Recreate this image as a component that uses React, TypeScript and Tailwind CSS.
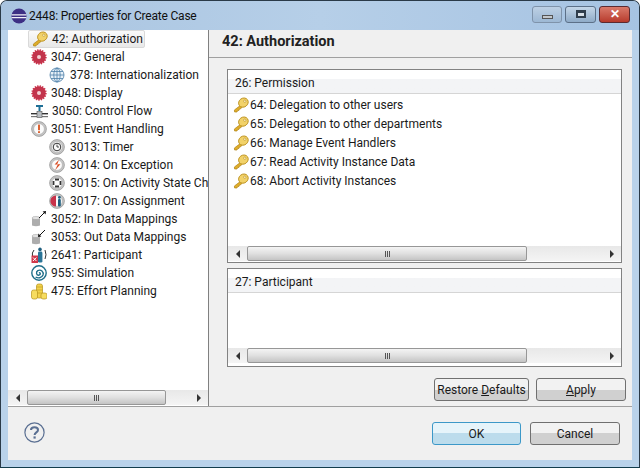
import React from "react";

const Key = () => (
  <svg width="16" height="16" viewBox="0 0 16 16" className="shrink-0">
    <path d="M7.2 8.6 L1.4 13 L1.6 15 L4 15 L4.6 13.6 L6 13.4 L6.4 12 L8 11.6 L9 10" fill="#e0ae2a" stroke="#b08418" strokeWidth="0.7" />
    <ellipse cx="10.4" cy="5.6" rx="5" ry="4.4" fill="#f2d269" stroke="#bd9322" strokeWidth="0.9" transform="rotate(-35 10.4 5.6)" />
    <circle cx="11.8" cy="4.2" r="1.2" fill="#fff6d0" stroke="#b58a18" strokeWidth="0.6" />
  </svg>
);

const Gear = () => (
  <svg width="16" height="16" viewBox="0 0 16 16" className="shrink-0">
    <circle cx="8" cy="8" r="6.8" fill="#c8324a" stroke="#c8324a" strokeWidth="1.8" strokeDasharray="1.3 1.2" />
    <circle cx="8" cy="8" r="6" fill="#c2344c" />
    <circle cx="8" cy="8" r="2" fill="#f4d0d4" />
  </svg>
);

const Globe = () => (
  <svg width="16" height="16" viewBox="0 0 16 16" fill="none" stroke="#4d7fa8" strokeWidth="0.8" className="shrink-0">
    <circle cx="8" cy="8" r="7" fill="#e6f0f8" />
    <ellipse cx="8" cy="8" rx="3.2" ry="7" />
    <path d="M8 1 V15 M1 8 H15 M2 4.5 H14 M2 11.5 H14" />
  </svg>
);

const Flow = () => (
  <svg width="17" height="16" viewBox="0 0 17 16" className="shrink-0">
    <path d="M5 2 H12 V4 H9.5 V8 H7.5 V4 H5 Z" fill="#1f6f96" />
    <rect x="0" y="10" width="17" height="1.4" fill="#333" />
    <rect x="0" y="13" width="17" height="1.2" fill="#777" />
    <rect x="6" y="8.5" width="5" height="6" fill="#b8bcc0" stroke="#555" strokeWidth="0.6" />
  </svg>
);

const Ring = ({ children }: { children?: React.ReactNode }) => (
  <svg width="16" height="16" viewBox="0 0 16 16" className="shrink-0">
    <circle cx="8" cy="8" r="7.4" fill="#c6c6c6" stroke="#8f8f8f" strokeWidth="0.7" />
    <circle cx="8" cy="8" r="5.4" fill="#fbfbfb" stroke="#9c9c9c" strokeWidth="0.5" />
    {children}
  </svg>
);

const Alert = () => (
  <Ring>
    <rect x="7.1" y="3.6" width="1.8" height="5.6" fill="#d9541e" />
    <rect x="7.1" y="10.2" width="1.8" height="1.8" fill="#d9541e" />
  </Ring>
);

const Timer = () => (
  <Ring>
    <circle cx="8" cy="8" r="3.8" fill="none" stroke="#333" strokeWidth="1" />
    <path d="M8 5.6 V8 H10" fill="none" stroke="#333" strokeWidth="0.9" />
  </Ring>
);

const Exception = () => (
  <Ring>
    <path d="M10 2.8 L5.6 7.6 H8.8 L6 13.2 L11.4 7.2 H8.2 Z" fill="#d9481e" />
  </Ring>
);

const StateChange = () => (
  <Ring>
    <path d="M6 3.6 H10 V5.4 H6 Z M6 10.6 H10 V12.4 H6 Z M3.6 6 H5.4 V10 H3.6 Z M10.6 6 H12.4 V10 H10.6 Z" fill="#333" />
  </Ring>
);

const Assignment = () => (
  <Ring>
    <path d="M7 2.4 A5.6 5.6 0 0 0 7 13.6 Z" fill="#c8324a" />
    <circle cx="10.4" cy="4.4" r="1.4" fill="#1f5f7f" />
    <rect x="9" y="6" width="2.8" height="7.4" rx="1" fill="#1f5f7f" />
  </Ring>
);

const DataMap = ({ out }: { out?: boolean }) => (
  <svg width="16" height="16" viewBox="0 0 16 16" className="shrink-0">
    <path d="M1 7 V14.5 Q5 16 9 14.5 V7 Z" fill="#adadad" />
    <ellipse cx="5" cy="7" rx="4" ry="1.6" fill="#e2e2e2" stroke="#9a9a9a" strokeWidth="0.5" />
    <path d={out ? "M14 1 L8 7" : "M8 7 L14 1"} stroke="#111" strokeWidth="1" />
    {out ? <path d="M7 8 L7.4 4.6 L10.4 7.6 Z" fill="#111" /> : <path d="M15 0 L14.6 3.4 L11.6 .4 Z" fill="#111" />}
  </svg>
);

const Participant = () => (
  <svg width="16" height="17" viewBox="0 0 16 17" className="shrink-0">
    <path d="M3 3 Q0.5 6 1.5 9" fill="none" stroke="#333" strokeWidth="1" />
    <path d="M14 3 Q16 8 14 12" fill="none" stroke="#333" strokeWidth="1" />
    <circle cx="9" cy="2.4" r="1.8" fill="#1f5f7f" />
    <rect x="7" y="4.6" width="4.4" height="11" rx="1.4" fill="#2a7497" />
    <rect x="0.5" y="8.5" width="6.5" height="7.5" fill="#d0384a" />
    <path d="M2 10.5 L5.4 14 M5.4 10.5 L2 14" stroke="#fff" strokeWidth="1" />
  </svg>
);

const Spiral = () => (
  <svg width="16" height="16" viewBox="0 0 16 16" fill="none" stroke="#1f6f8a" strokeWidth="1.4" className="shrink-0">
    <circle cx="8" cy="8" r="7.2" />
    <path d="M8 8 C9.4 7 10 9.6 8 10.2 C5.4 10.6 4.6 7 6.8 5.6 C10 4 13 7 12 10 C10.8 13 7 13.6 4.6 12" />
  </svg>
);

const Coins = () => (
  <svg width="16" height="17" viewBox="0 0 16 17" className="shrink-0">
    <rect x="5.5" y="1" width="6" height="14" rx="2" fill="#f2d24a" stroke="#b8941c" strokeWidth="0.7" />
    <path d="M5.5 4 H11.5 M5.5 7 H11.5 M5.5 10 H11.5" stroke="#b8941c" strokeWidth="0.6" />
    <rect x="0.5" y="7" width="6" height="9" rx="2" fill="#f6dc60" stroke="#b8941c" strokeWidth="0.7" />
    <rect x="10" y="10" width="6" height="6" rx="2" fill="#f6dc60" stroke="#b8941c" strokeWidth="0.7" />
  </svg>
);

const treeRows: { label: string; icon: React.ReactNode; child?: boolean; selected?: boolean }[] = [
  { label: "42: Authorization", icon: <Key />, selected: true },
  { label: "3047: General", icon: <Gear /> },
  { label: "378: Internationalization", icon: <Globe />, child: true },
  { label: "3048: Display", icon: <Gear /> },
  { label: "3050: Control Flow", icon: <Flow /> },
  { label: "3051: Event Handling", icon: <Alert /> },
  { label: "3013: Timer", icon: <Timer />, child: true },
  { label: "3014: On Exception", icon: <Exception />, child: true },
  { label: "3015: On Activity State Ch", icon: <StateChange />, child: true },
  { label: "3017: On Assignment", icon: <Assignment />, child: true },
  { label: "3052: In Data Mappings", icon: <DataMap /> },
  { label: "3053: Out Data Mappings", icon: <DataMap out /> },
  { label: "2641: Participant", icon: <Participant /> },
  { label: "955: Simulation", icon: <Spiral /> },
  { label: "475: Effort Planning", icon: <Coins /> },
];

const permissions = [
  "64: Delegation to other users",
  "65: Delegation to other departments",
  "66: Manage Event Handlers",
  "67: Read Activity Instance Data",
  "68: Abort Activity Instances",
];

function ScrollBar({ thumb }: { thumb: string }) {
  return (
    <div className="h-[15px] flex items-stretch bg-gradient-to-b from-[#e8e8e8] to-[#f4f4f4]">
      <div className="w-[19px] flex items-center justify-center shrink-0">
        <div className="border-y-[4px] border-y-transparent border-r-[4px] border-r-[#333]" />
      </div>
      <div className={`${thumb} shrink-0 border border-[#979797] rounded-[2px] bg-gradient-to-b from-[#f4f4f4] via-[#e0e0e0] to-[#c4c4c4] flex items-center justify-center gap-px`}>
        <div className="w-px h-[6px] bg-[#555]" />
        <div className="w-px h-[6px] bg-[#555]" />
        <div className="w-px h-[6px] bg-[#555]" />
      </div>
      <div className="flex-1" />
      <div className="w-[19px] flex items-center justify-center shrink-0">
        <div className="border-y-[4px] border-y-transparent border-l-[4px] border-l-[#333]" />
      </div>
    </div>
  );
}

function GroupHeader({ label }: { label: string }) {
  return (
    <div className="h-[24px] shrink-0 pl-[7px] pt-[3px] leading-[21px] border-b border-[#d5d5d5] bg-gradient-to-b from-white from-[40%] to-[#f3f4f6] to-[40%]">
      {label}
    </div>
  );
}

function Button({ label, className }: { label: React.ReactNode; className: string }) {
  return (
    <button className={`${className} h-[23px] whitespace-nowrap rounded-[3px] border border-[#707070] bg-gradient-to-b from-[#f2f2f2] from-50% to-[#d0d0d0] to-50% leading-none text-[#1a1a1a]`}>
      {label}
    </button>
  );
}

export default function App() {
  return (
    <div
      className="w-[640px] h-[468px] flex flex-col overflow-hidden rounded-t-[7px] border border-[#2a3a48] border-b-[#123c4c] bg-[#b9d2ea] text-[12px] text-[#1a1a1a]"
      style={{ fontFamily: 'Roboto, "Noto Sans", sans-serif' }}
    >
      {/* Title bar */}
      <div className="h-[29px] shrink-0 flex items-center bg-gradient-to-r from-[#a9c4e0] via-[#b6cfe8] to-[#a6c3e2]">
        <svg width="16" height="16" viewBox="0 0 16 16" className="ml-[10px] shrink-0">
          <circle cx="8" cy="8" r="7.6" fill="#3d2f84" />
          <path d="M0.6 6.2 H15.4 V7.4 H0.6 Z M0.6 9 H15.4 V10.2 H0.6 Z" fill="#f2f0f8" />
        </svg>
        <span className="ml-[2px] text-[12px] tracking-[-0.2px] text-[#101010]">2448: Properties for Create Case</span>
        <div className="ml-auto mr-[9px] mb-[3px] flex gap-[3px]">
          <div className="w-[30px] h-[17px] rounded-[3px] border border-[#7f93aa] bg-gradient-to-b from-[#bdd0e4] to-[#9db8d4] flex items-center justify-center">
            <div className="w-[11px] h-[4px] mt-[5px] bg-[#c4c8cc] border border-[#555]" />
          </div>
          <div className="w-[31px] h-[17px] rounded-[3px] border border-[#5c7088] bg-gradient-to-b from-[#c4d6e8] to-[#8fabc8] flex items-center justify-center">
            <div className="w-[10px] h-[8px] border-2 border-t-[3px] border-[#2f3d4c] bg-[#d8e0e8]" />
          </div>
          <div className="w-[31px] h-[17px] rounded-[3px] border border-[#5c2a30] bg-gradient-to-b from-[#d9796a] to-[#b73a2c] flex items-center justify-center text-white text-[12px] font-bold leading-none">
            ✕
          </div>
        </div>
      </div>

      {/* Dialog body */}
      <div className="flex-1 min-h-0 mx-[7px] mb-[7px] bg-[#f0f0f0] flex flex-col">
        <div className="h-[377px] shrink-0 flex border-b border-[#a0a0a0]">
          {/* Tree */}
          <div className="w-[201px] shrink-0 flex flex-col bg-white border-r border-[#808080]">
            <div className="flex-1 min-h-0 pl-[20px]">
              {treeRows.map((row) => (
                <div key={row.label} className={`h-[18px] flex items-center whitespace-nowrap ${row.child ? "pl-[21px]" : "pl-[3px]"}`}>
                  {row.selected ? (
                    <div className="-ml-[3px] w-[117px] h-[18px] flex items-center pl-[3px] rounded-[2px] border border-[#d9d9d9] bg-gradient-to-b from-[#fafafa] to-[#e8e8e8]">
                      {row.icon}
                      <span className="ml-[4px]">{row.label}</span>
                    </div>
                  ) : (
                    <>
                      {row.icon}
                      <span className={row.child ? "ml-[5px]" : "ml-[4px]"}>{row.label}</span>
                    </>
                  )}
                </div>
              ))}
            </div>
            <div className="mb-px">
              <ScrollBar thumb="w-[139px]" />
            </div>
          </div>

          {/* Right pane */}
          <div className="flex-1 min-w-0 flex flex-col">
            <div className="h-[28px] shrink-0 pl-[13px] pb-[3px] flex items-center border-b border-[#a0a0a0] text-[14.5px] font-bold text-[#222]">
              42: Authorization
            </div>
            <div className="flex-1 min-h-0 pl-[18px] pr-[10px] pt-[11px] flex flex-col">
              <div className="h-[194px] shrink-0 flex flex-col border border-[#828282] bg-white">
                <GroupHeader label="26: Permission" />
                <div className="flex-1 min-h-0 pt-[1px] pl-[5px]">
                  {permissions.map((p) => (
                    <div key={p} className="h-[19px] flex items-center whitespace-nowrap">
                      <Key />
                      <span className="ml-px">{p}</span>
                    </div>
                  ))}
                </div>
                <div className="mb-px">
                  <ScrollBar thumb="w-[280px]" />
                </div>
              </div>
              <div className="h-[99px] mt-[5px] shrink-0 flex flex-col border border-[#828282] bg-white">
                <GroupHeader label="27: Participant" />
                <div className="flex-1 min-h-0" />
                <div className="mb-[3px]">
                  <ScrollBar thumb="w-[280px]" />
                </div>
              </div>
              <div className="mt-[11px] -mr-[4px] flex justify-end gap-[7px]">
                <Button className="w-[95px]" label={<>Restore <u>D</u>efaults</>} />
                <Button className="w-[90px]" label={<><u>A</u>pply</>} />
              </div>
            </div>
          </div>
        </div>

        {/* Footer */}
        <div className="flex-1 min-h-0 flex items-start pt-[15px] pl-[16px] pr-[12px]">
          <svg width="21" height="21" viewBox="0 0 21 21" fill="none" className="shrink-0">
            <circle cx="10.5" cy="10.5" r="9.6" stroke="#5a6f92" strokeWidth="1.2" />
            <path d="M7 8 C7 4.4 14 4.4 14 8 C14 10.4 10.6 10.4 10.6 13" stroke="#5a6f92" strokeWidth="2" />
            <rect x="9.5" y="14.4" width="2.2" height="2.2" fill="#5a6f92" />
          </svg>
          <div className="ml-auto flex gap-[9px]">
            <button className="w-[89px] h-[23px] rounded-[3px] border border-[#3c98c8] bg-gradient-to-b from-[#e6f4fa] from-50% to-[#bcdcec] to-50% text-[#1a1a1a] leading-none">
              OK
            </button>
            <Button className="w-[90px]" label="Cancel" />
          </div>
        </div>
      </div>
    </div>
  );
}
